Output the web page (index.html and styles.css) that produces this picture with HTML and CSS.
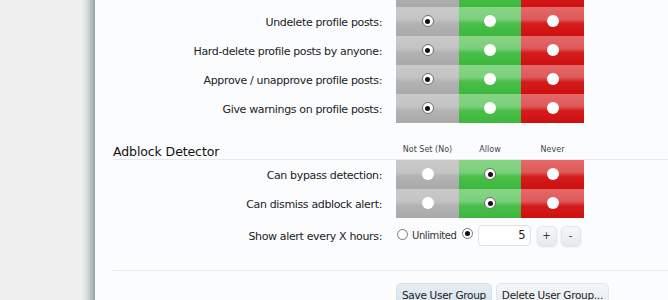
FILE: index.html
```html
<!DOCTYPE html>
<html>
<head>
<meta charset="utf-8">
<link rel="stylesheet" href="styles.css">
</head>
<body>
<div class="page">
  <div class="side"></div>
  <div class="edge"></div>
  <main class="panel">
    <div class="content">
      <div class="perms">
        <div class="row">
          <div class="label"></div>
          <div class="cell gray"><span class="radio on"></span></div>
          <div class="cell green"><span class="radio"></span></div>
          <div class="cell red"><span class="radio"></span></div>
        </div>
        <div class="row">
          <div class="label">Undelete profile posts:</div>
          <div class="cell gray"><span class="radio on"></span></div>
          <div class="cell green"><span class="radio"></span></div>
          <div class="cell red"><span class="radio"></span></div>
        </div>
        <div class="row">
          <div class="label">Hard-delete profile posts by anyone:</div>
          <div class="cell gray"><span class="radio on"></span></div>
          <div class="cell green"><span class="radio"></span></div>
          <div class="cell red"><span class="radio"></span></div>
        </div>
        <div class="row">
          <div class="label">Approve / unapprove profile posts:</div>
          <div class="cell gray"><span class="radio on"></span></div>
          <div class="cell green"><span class="radio"></span></div>
          <div class="cell red"><span class="radio"></span></div>
        </div>
        <div class="row">
          <div class="label">Give warnings on profile posts:</div>
          <div class="cell gray"><span class="radio on"></span></div>
          <div class="cell green"><span class="radio"></span></div>
          <div class="cell red"><span class="radio"></span></div>
        </div>
      </div>

      <div class="section-head">
        <h3 class="section-title">Adblock Detector</h3>
        <div class="col-names">
          <span>Not Set (No)</span>
          <span>Allow</span>
          <span>Never</span>
        </div>
      </div>

      <div class="perms">
        <div class="row">
          <div class="label">Can bypass detection:</div>
          <div class="cell gray"><span class="radio"></span></div>
          <div class="cell green"><span class="radio on"></span></div>
          <div class="cell red"><span class="radio"></span></div>
        </div>
        <div class="row">
          <div class="label">Can dismiss adblock alert:</div>
          <div class="cell gray"><span class="radio"></span></div>
          <div class="cell green"><span class="radio on"></span></div>
          <div class="cell red"><span class="radio"></span></div>
        </div>
      </div>

      <div class="row-int">
        <div class="label">Show alert every X hours:</div>
        <div class="int-controls">
          <label class="opt"><span class="radio plain"></span>Unlimited</label>
          <span class="radio plain on"></span>
          <div class="num">5</div>
          <button class="spin">+</button>
          <button class="spin">-</button>
        </div>
      </div>

      <div class="submit">
        <button class="btn primary">Save User Group</button>
        <button class="btn">Delete User Group...</button>
      </div>
    </div>
  </main>
</div>
</body>
</html>
```

FILE: styles.css
```css
html, body {
  margin: 0;
  padding: 0;
}
body {
  background: #f0f0f0;
  font-family: "DejaVu Sans", "Liberation Sans", sans-serif;
  font-size: 11px;
  color: #222;
  overflow: hidden;
}
.page {
  display: flex;
  height: 300px;
}
.side {
  width: 82px;
  flex: none;
  background: #f0f0f0;
}
.edge {
  width: 13px;
  flex: none;
  background: linear-gradient(to right, #eceeee 0%, #d6dbdc 40%, #aab6ba 80%, #93a1a7 100%);
}
.panel {
  flex: 1;
  background: #fbfcfe;
  overflow: hidden;
}
.content {
  padding-left: 18px;
  margin-top: -22px;
}
.perms {
  display: flex;
  flex-direction: column;
}
.row {
  display: grid;
  grid-template-columns: 269px 77px 62px 63px;
  height: 29px;
}
.row .label,
.row-int .label {
  text-align: right;
  align-self: center;
  color: #222;
  white-space: nowrap;
  letter-spacing: -0.35px;
  padding-top: 1px;
}
.row-int .label {
  padding-right: 14px;
}
.cell {
  display: flex;
  align-items: center;
  justify-content: center;
}
.row .cell.gray { margin-left: 14px; }
.gray {
  background: linear-gradient(to bottom, #c9c9c9 0%, #c4c4c4 42%, #b2b2b2 58%, #a9a9a9 100%);
}
.green {
  background: linear-gradient(to bottom, #86d586 0%, #7ccf7c 42%, #49be49 58%, #3cb83c 100%);
}
.red {
  background: linear-gradient(to bottom, #e46868 0%, #df5a5a 42%, #d41c1c 58%, #cf0f0f 100%);
}
.radio {
  width: 12px;
  height: 12px;
  border-radius: 50%;
  background: #fff;
  box-sizing: border-box;
  display: inline-block;
  position: relative;
  margin-top: -1px;
}
.radio.on {
  border: 1px solid #6d6d6d;
}
.radio.on::after {
  content: "";
  position: absolute;
  left: 2.5px;
  top: 2.5px;
  width: 5px;
  height: 5px;
  border-radius: 50%;
  background: #111;
}
.section-head {
  display: flex;
  align-items: flex-end;
  margin-top: 20px;
  height: 16px;
  border-bottom: 1px solid #e3e9ee;
}
.section-title {
  margin: 0;
  width: 283px;
  font-size: 12.5px;
  font-weight: normal;
  color: #111;
  line-height: 15px;
  letter-spacing: -0.1px;
}
.col-names {
  display: grid;
  grid-template-columns: 63px 62px 63px;
  font-size: 8px;
  color: #444;
  text-align: center;
  line-height: 13px;
  padding-bottom: 3px;
}
.row-int {
  display: grid;
  grid-template-columns: 283px auto;
  margin-top: 6px;
  height: 23px;
  align-items: center;
}
.int-controls {
  display: flex;
  align-items: center;
}
.radio.plain {
  border: 1px solid #777;
  width: 11px;
  height: 11px;
}
.radio.plain.on::after {
  left: 2px;
  top: 2px;
}
.opt {
  display: flex;
  align-items: center;
  gap: 4px;
  color: #333;
  font-size: 10px;
  letter-spacing: -0.4px;
  margin-left: 1px;
  margin-right: 5px;
}
.opt .radio { margin-top: -3px; }
.int-controls > .radio.on { margin-top: -4px; }
.num {
  margin-left: 5px;
  width: 53px;
  height: 21px;
  box-sizing: border-box;
  border: 1px solid #dde1e5;
  border-radius: 4px;
  background: #fff;
  text-align: right;
  padding-right: 4px;
  line-height: 19px;
  font-size: 11.5px;
}
.spin {
  margin-left: 6px;
  width: 20px;
  height: 20px;
  padding: 0;
  border: 1px solid #e3e6ea;
  border-radius: 5px;
  background: linear-gradient(to bottom, #f6f7f9, #e6e9ee);
  font-family: "DejaVu Sans", sans-serif;
  font-size: 10px;
  color: #333;
  box-shadow: 0 1px 2px rgba(0,0,0,0.12);
}
.spin + .spin { margin-left: 4px; }
.submit {
  margin-top: 23px;
  border-top: 1px solid #e6ecef;
  padding-top: 12px;
  padding-left: 283px;
  display: flex;
  gap: 4px;
}
.btn {
  height: 24px;
  padding: 0 5px;
  border: 1px solid #dfe5ea;
  border-radius: 5px;
  background: linear-gradient(to bottom, #f4f6f8, #e9edf1);
  font-family: "DejaVu Sans", sans-serif;
  font-size: 10.5px;
  letter-spacing: -0.3px;
  white-space: nowrap;
  color: #222;
}
.btn.primary {
  background: linear-gradient(to bottom, #e6eef4, #d7e3ec);
  border-color: #d4dfe8;
}
```
